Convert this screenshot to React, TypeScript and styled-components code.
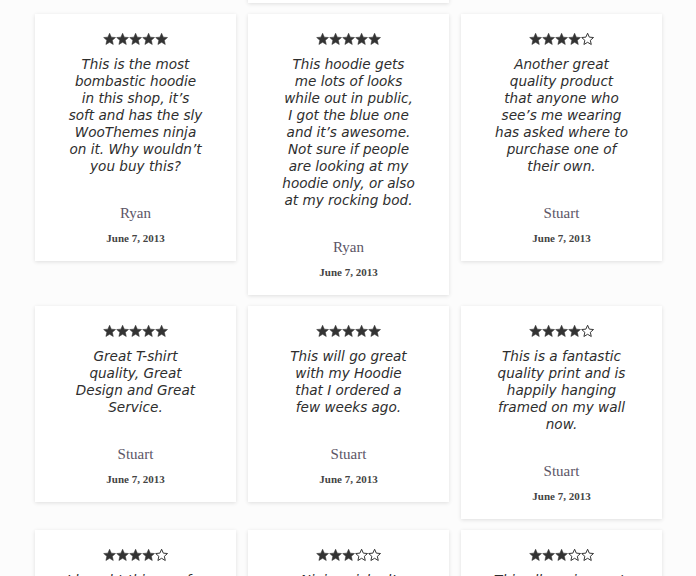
import React from "react";
import styled, { createGlobalStyle } from "styled-components";

const Global = createGlobalStyle`
  html, body { margin: 0; padding: 0; background: #fcfcfc; }
  body { overflow: hidden; }
`;

const Viewport = styled.div`
  width: 696px;
  height: 576px;
  overflow: hidden;
  background: #fcfcfc;
`;

const Grid = styled.div`
  display: grid;
  grid-template-columns: repeat(3, 201px);
  column-gap: 12px;
  row-gap: 11px;
  align-items: start;
  padding-left: 35px;
  margin-top: -197px;
`;

const Card = styled.div`
  background: #ffffff;
  box-shadow: 0 1px 4px rgba(0, 0, 0, 0.12);
  display: flex;
  flex-direction: column;
  align-items: center;
  padding: 18px 10px 15px;
  box-sizing: border-box;
`;

const Sliver = styled(Card)`
  grid-column: 2;
  height: 200px;
`;

const Spacer = styled.div``;

const Stars = styled.div`
  display: flex;
  height: 14px;
  gap: 0;
`;

const Quote = styled.p`
  margin: 10px 0 0;
  font-family: "DejaVu Sans", "Open Sans", sans-serif;
  font-style: italic;
  font-size: 13.6px;
  line-height: 17px;
  color: #2e2e2e;
  text-align: center;
`;

const Line = styled.span`
  display: block;
  white-space: nowrap;
`;

const Name = styled.div`
  margin-top: 28px;
  font-family: "Liberation Serif", "DejaVu Serif", serif;
  font-size: 15px;
  line-height: 20px;
  color: #5c5566;
`;

const DateText = styled.div`
  margin-top: 7px;
  font-family: "Liberation Serif", "DejaVu Serif", serif;
  font-weight: bold;
  font-size: 11px;
  line-height: 16px;
  color: #444;
`;

const Star: React.FC<{ filled: boolean }> = ({ filled }) => (
  <svg width="13.2" height="14" viewBox="0 0 24 24">
    <polygon
      points="12,1.5 15.1,8.6 22.8,9.3 17,14.4 18.7,22 12,18 5.3,22 7,14.4 1.2,9.3 8.9,8.6"
      fill={filled ? "#333" : "#fff"}
      stroke="#333"
      strokeWidth={filled ? 1 : 1.8}
      strokeLinejoin="round"
    />
  </svg>
);

type Review = { rating: number; lines: string[]; name: string };

const reviews: Review[] = [
  {
    rating: 5,
    lines: [
      "This is the most",
      "bombastic hoodie",
      "in this shop, it’s",
      "soft and has the sly",
      "WooThemes ninja",
      "on it. Why wouldn’t",
      "you buy this?",
    ],
    name: "Ryan",
  },
  {
    rating: 5,
    lines: [
      "This hoodie gets",
      "me lots of looks",
      "while out in public,",
      "I got the blue one",
      "and it’s awesome.",
      "Not sure if people",
      "are looking at my",
      "hoodie only, or also",
      "at my rocking bod.",
    ],
    name: "Ryan",
  },
  {
    rating: 4,
    lines: [
      "Another great",
      "quality product",
      "that anyone who",
      "see’s me wearing",
      "has asked where to",
      "purchase one of",
      "their own.",
    ],
    name: "Stuart",
  },
  {
    rating: 5,
    lines: ["Great T-shirt", "quality, Great", "Design and Great", "Service."],
    name: "Stuart",
  },
  {
    rating: 5,
    lines: ["This will go great", "with my Hoodie", "that I ordered a", "few weeks ago."],
    name: "Stuart",
  },
  {
    rating: 4,
    lines: [
      "This is a fantastic",
      "quality print and is",
      "happily hanging",
      "framed on my wall",
      "now.",
    ],
    name: "Stuart",
  },
  {
    rating: 4,
    lines: ["I bought this one for", "my daughter and", "she loves it."],
    name: "Maria",
  },
  {
    rating: 3,
    lines: ["Ninja, wicked!", "Really nice design."],
    name: "Coen",
  },
  {
    rating: 3,
    lines: ["This album is great,", "I love it."],
    name: "Coen",
  },
];

const ReviewCard: React.FC<{ review: Review }> = ({ review }) => (
  <Card>
    <Stars>
      {[0, 1, 2, 3, 4].map((i) => (
        <Star key={i} filled={i < review.rating} />
      ))}
    </Stars>
    <Quote>
      {review.lines.map((l, i) => (
        <Line key={i}>{l}</Line>
      ))}
    </Quote>
    <Name>{review.name}</Name>
    <DateText>June 7, 2013</DateText>
  </Card>
);

export default function App() {
  return (
    <Viewport>
      <Global />
      <Grid>
        <Sliver />
        <Spacer />
        {reviews.map((r, i) => (
          <ReviewCard key={i} review={r} />
        ))}
      </Grid>
    </Viewport>
  );
}
